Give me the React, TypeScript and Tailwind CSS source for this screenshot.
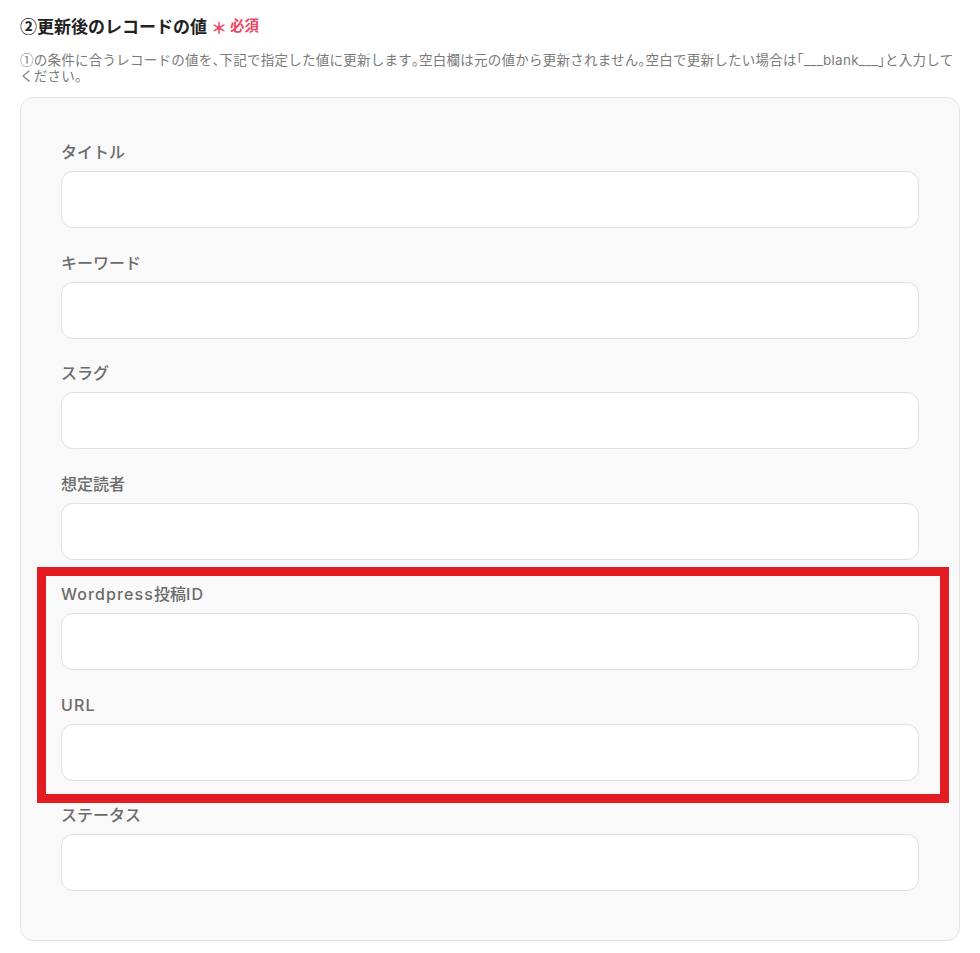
import React from "react";

const fields = ["タイトル", "キーワード", "スラグ", "想定読者", "Wordpress投稿ID", "URL", "ステータス"];

function H({ children }: { children: React.ReactNode }) {
  return <span className="[font-feature-settings:'halt']">{children}</span>;
}

const cjk = { fontFamily: '"Noto Sans CJK JP", sans-serif' };

function Label({ text }: { text: string }) {
  const parts = text.split(/([A-Za-z]+)/).filter((p) => p.length > 0);
  return (
    <label className="h-5 text-[16px] leading-5 font-medium text-[#6b6b6b] whitespace-nowrap">
      {parts.map((p, i) =>
        /^[A-Za-z]+$/.test(p) ? (
          <span key={i} className="tracking-[1.1px]">
            {p}
          </span>
        ) : (
          <span key={i}>{p}</span>
        )
      )}
    </label>
  );
}

export default function App() {
  return (
    <div
      className="relative w-[980px] h-[953px] bg-white px-5 pt-4"
      style={{ fontFamily: 'Inter, "Noto Sans CJK JP", sans-serif' }}
    >
      <div className="flex items-center h-5">
        <span className="text-[17px] leading-5 font-semibold text-[#222]">
          <span style={cjk}>②</span>更新後のレコードの値
        </span>
        <span className="ml-[4px] mt-[3px] text-[16px] leading-5 font-bold text-[#ee4560]">＊</span>
        <span className="ml-[3px] text-[14.5px] leading-5 font-bold text-[#ee4560]">必須</span>
      </div>
      <p className="mt-[15px] text-[13.5px] leading-4 tracking-[0.25px] text-[#7a7a7a]">
        <span className="whitespace-nowrap">
          <span style={cjk}>①</span>の条件に合うレコードの値を<H>、</H>下記で指定した値に更新します<H>。</H>空白欄は元の値から更新されません<H>。</H>空白で更新したい場合は<H>「</H>___blank___<H>」</H>と入力して
        </span>
        <br />
        ください<H>。</H>
      </p>
      <div className="mt-[13px] w-[940px] rounded-[13px] border border-[#e4e4e7] bg-[#f9f9f9] pl-10 pr-10 pt-[44px] pb-[49px] flex flex-col gap-[24.5px]">
        {fields.map((f) => (
          <div key={f} className="flex flex-col">
            <Label text={f} />
            <div className="mt-[9px] h-[57px] rounded-[12px] border border-[#dfdfe4] bg-white" />
          </div>
        ))}
      </div>
      <div className="absolute left-[37px] top-[567px] w-[912px] h-[236px] border-[9px] border-[#e31c22] pointer-events-none" />
    </div>
  );
}
